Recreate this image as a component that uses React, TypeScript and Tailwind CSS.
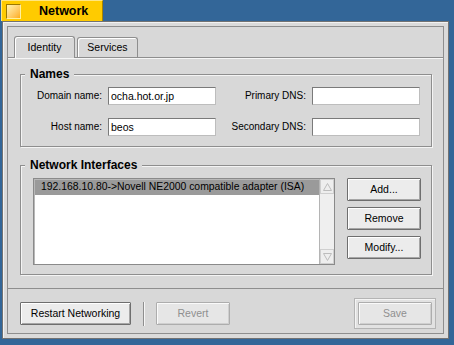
import React from 'react';

function Field({ value }: { value?: string }) {
  return (
    <div className="w-[108px] h-[18px] bg-white border border-[#7a7a7a] border-r-[#bdbdbd] border-b-[#bdbdbd] flex items-center pl-[2px] text-[10.5px] leading-none">
      {value}
    </div>
  );
}

function Btn({ label, className = '', disabled = false }: { label: string; className?: string; disabled?: boolean }) {
  return (
    <div
      className={`h-[23px] flex items-center justify-center text-[10.5px] leading-none border rounded-[1px] ${
        disabled
          ? 'border-[#adadad] bg-[#e6e6e6] text-[#8f8f8f] shadow-[inset_1px_1px_0_#fafafa,inset_-1px_-1px_0_#cfcfcf]'
          : 'border-[#6e6e6e] bg-[#ececec] text-black shadow-[inset_1px_1px_0_#ffffff,inset_-1px_-1px_0_#a6a6a6]'
      } ${className}`}
    >
      {label}
    </div>
  );
}

function Box({ title, className = '', children }: { title: string; className?: string; children: React.ReactNode }) {
  return (
    <div className={`relative border border-[#8e8e8e] shadow-[inset_1px_1px_0_#f4f4f4,1px_1px_0_#f4f4f4] ${className}`}>
      <span className="absolute -top-[9px] left-[4px] px-[5px] bg-[#d8d8d8] text-[12px] font-bold leading-[16px]">
        {title}
      </span>
      {children}
    </div>
  );
}

function Arrow({ up }: { up?: boolean }) {
  return (
    <div className="w-[14px] h-[15px] flex items-center justify-center border border-[#cfcfcf] bg-[#eeeeee]">
      <svg width="9" height="8" viewBox="0 0 9 8">
        <path
          d={up ? 'M4.5 0.5 L8.5 7.5 L0.5 7.5 Z' : 'M0.5 0.5 L8.5 0.5 L4.5 7.5 Z'}
          fill="none"
          stroke="#bcbcbc"
          strokeWidth="1"
        />
      </svg>
    </div>
  );
}

export default function App() {
  return (
    <div className="w-[454px] h-[345px] bg-[#336698] overflow-hidden font-['Liberation_Sans',Arial,sans-serif] text-black">
      {/* title tab */}
      <div className="ml-px w-[102px] h-[21px] bg-[#ffcb00] border-t border-l border-[#ffe680] border-r border-r-[#a88400] flex items-center">
        <div className="ml-[4px] w-[15px] h-[15px] border border-[#9c7800] border-r-[#fff0a0] border-b-[#fff0a0] bg-gradient-to-br from-[#fff4b0] to-[#ffad00]" />
        <span className="ml-[18px] text-[12.5px] font-bold leading-none">Network</span>
      </div>

      {/* window */}
      <div className="ml-[2px] w-[447px] h-[318px] border border-[#727272] bg-[#dadada] p-[4px] shadow-[inset_1px_1px_0_#f2f2f2]">
        <div className="w-full h-full border border-[#8e8e8e] bg-[#d8d8d8] flex flex-col">
          {/* tabs */}
          <div className="pt-[9px] pl-[6px] flex items-end gap-[2px]">
            <div className="relative z-10 -mb-px w-[61px] h-[22px] bg-[#d8d8d8] border-l border-t border-r border-[#8e8e8e] rounded-t-[3px] shadow-[inset_1px_1px_0_#ffffff] flex items-center justify-center text-[10.5px] leading-none">
              Identity
            </div>
            <div className="w-[61px] h-[20px] bg-[#d8d8d8] border-l border-t border-r border-[#8e8e8e] rounded-t-[3px] shadow-[inset_1px_1px_0_#ffffff] flex items-center justify-center text-[10.5px] leading-none">
              Services
            </div>
          </div>

          {/* tab panel */}
          <div className="h-[232px] border-t border-b border-[#8e8e8e] shadow-[inset_0_1px_0_#f6f6f6] flex flex-col">
            <Box title="Names" className="mt-[16px] ml-[12px] w-[412px] h-[73px]">
              <div className="pt-[12px] flex flex-col gap-[13px] text-[10px] leading-none">
                <div className="flex items-center">
                  <span className="w-[81px] text-right">Domain name:</span>
                  <div className="ml-[6px]"><Field value="ocha.hot.or.jp" /></div>
                  <span className="w-[90px] text-right">Primary DNS:</span>
                  <div className="ml-[6px]"><Field /></div>
                </div>
                <div className="flex items-center">
                  <span className="w-[81px] text-right">Host name:</span>
                  <div className="ml-[6px]"><Field value="beos" /></div>
                  <span className="w-[90px] text-right">Secondary DNS:</span>
                  <div className="ml-[6px]"><Field /></div>
                </div>
              </div>
            </Box>

            <Box title="Network Interfaces" className="mt-[18px] ml-[12px] w-[412px] h-[110px]">
              <div className="pt-[12px] pl-[12px] flex">
                <div className="w-[302px] h-[87px] border border-[#8a8a8a] bg-white flex shadow-[inset_1px_1px_0_#b8b8b8]">
                  <div className="flex-1 pt-px pl-px">
                    <div className="h-[15px] bg-[#9a9a9a] flex items-center pl-[6px] text-[10.4px] leading-none whitespace-nowrap">
                      192.168.10.80-&gt;Novell NE2000 compatible adapter (ISA)
                    </div>
                  </div>
                  <div className="w-[15px] border-l border-[#b4b4b4] bg-[#efefef] flex flex-col justify-between">
                    <Arrow up />
                    <Arrow />
                  </div>
                </div>
                <div className="ml-[12px] flex flex-col gap-[6px]">
                  <Btn label="Add..." className="w-[74px]" />
                  <Btn label="Remove" className="w-[74px]" />
                  <Btn label="Modify..." className="w-[74px]" />
                </div>
              </div>
            </Box>
          </div>

          {/* bottom buttons */}
          <div className="pt-[13px] pl-[12px] pr-[7px] flex items-start">
            <Btn label="Restart Networking" className="w-[111px]" />
            <div className="ml-[12px] w-[2px] h-[24px] border-l border-[#8e8e8e] border-r border-r-[#f6f6f6]" />
            <Btn label="Revert" className="ml-[11px] w-[74px]" disabled />
            <div className="ml-auto -mt-[4px] w-[82px] h-[31px] border border-[#b4b4b4] bg-[#e2e2e2] p-[3px] shadow-[inset_1px_1px_0_#f4f4f4]">
              <Btn label="Save" className="w-full" disabled />
            </div>
          </div>
        </div>
      </div>
    </div>
  );
}
